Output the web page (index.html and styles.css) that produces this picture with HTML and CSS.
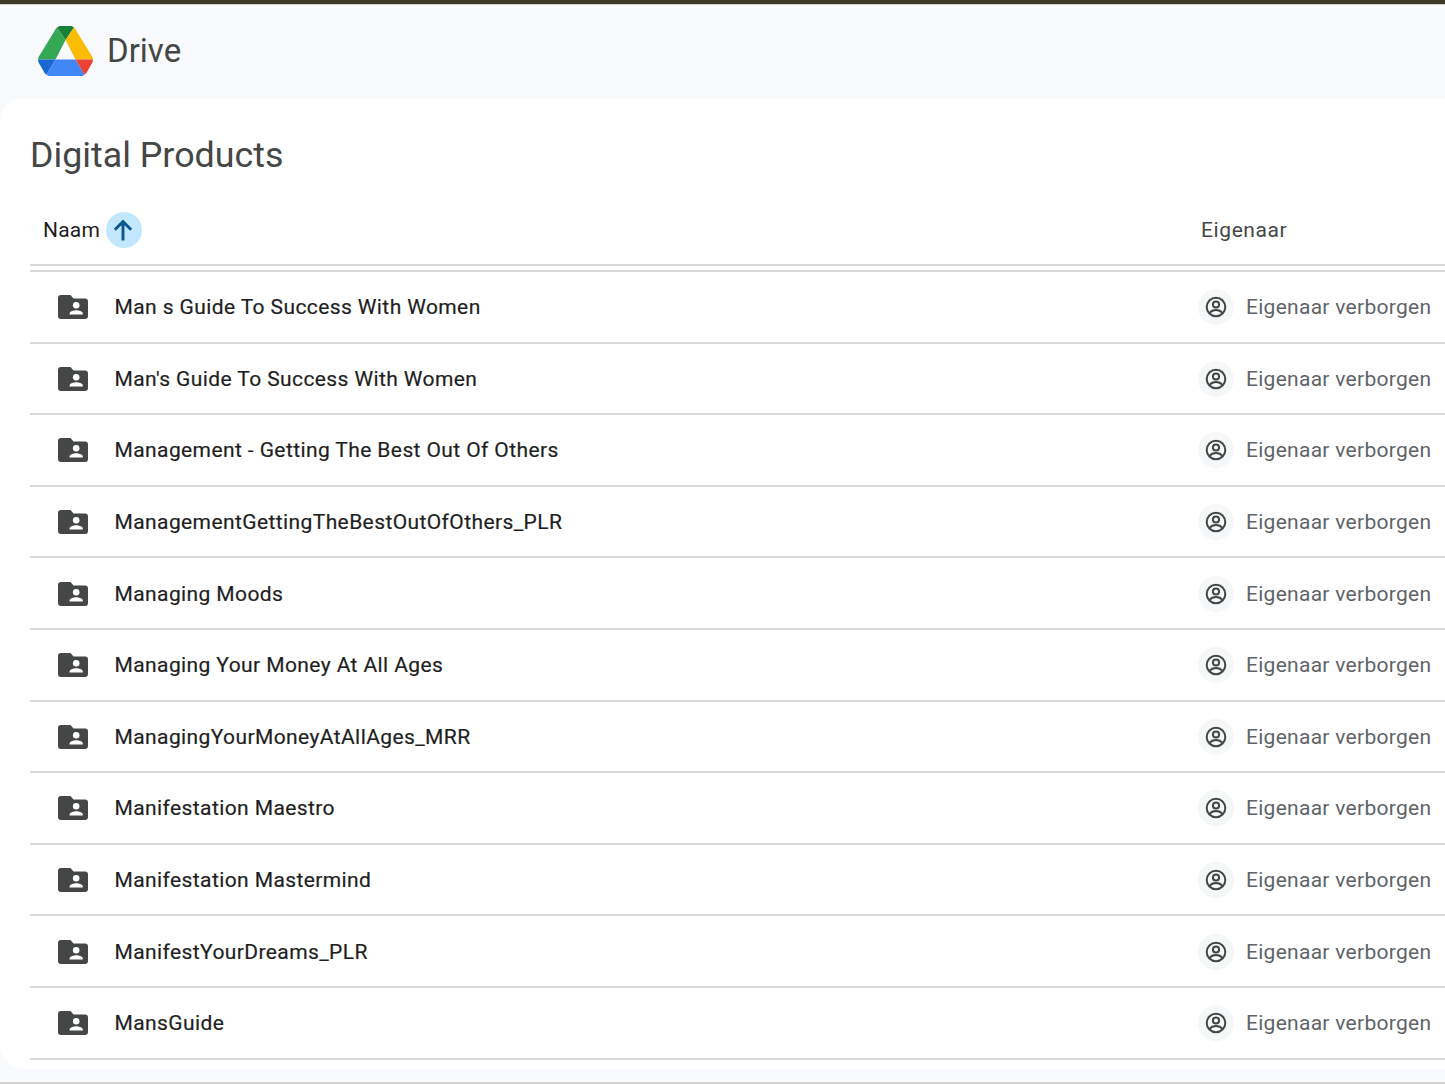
FILE: index.html
```html
<!DOCTYPE html>
<html lang="nl">
<head>
<meta charset="utf-8">
<title>Digital Products - Google Drive</title>
<link rel="stylesheet" href="styles.css">
</head>
<body>
<svg class="defs" width="0" height="0" aria-hidden="true">
  <symbol id="folder" viewBox="0 0 30 24">
    <path fill="#444746" d="M3 0h9.500l3 3.400H27a3 3 0 0 1 3 3V21a3 3 0 0 1-3 3H3a3 3 0 0 1-3-3V3a3 3 0 0 1 3-3z"/>
    <circle fill="#fff" cx="18.200" cy="10.200" r="3.300"/>
    <path fill="#fff" d="M11.600 19.600v-1.200c0-2 4.400-3.200 6.600-3.200s6.600 1.200 6.600 3.200v1.200z"/>
  </symbol>
  <symbol id="owner" viewBox="0 0 24 24">
    <circle cx="12" cy="12" r="9.300" fill="none" stroke="#444746" stroke-width="2"/>
    <circle cx="12" cy="9.500" r="3.100" fill="none" stroke="#444746" stroke-width="2"/>
    <path fill="none" stroke="#444746" stroke-width="2" d="M5.500 18c1.500-2 4-3 6.500-3s5 1 6.500 3"/>
  </symbol>
</svg>
<div class="topbar"></div>
<header class="brand">
  <svg class="logo" viewBox="0 0 55 50" aria-hidden="true">
    <path fill="#188038" d="M19 1.500 27.500 14 36 1.500C35 .6 33.800 0 32.300 0H22.700C21.300 0 20 .6 19 1.500z"/>
    <path fill="#34a853" d="M19 1.500C18.200 2.200 17.600 3 17.100 3.900L.9 30.600C.3 31.600 0 32.700 0 33.500H17.500L27.500 14z"/>
    <path fill="#fbbc04" d="M36 1.500 27.500 14 37.500 33.500H55C55 32.700 54.700 31.600 54.100 30.600L37.900 3.900C37.400 3 36.800 2.200 36 1.500z"/>
    <path fill="#1967d2" d="M0 33.500C0 34.700.3 35.800.9 36.900L6 46C6.600 47 7.500 48 8.500 48.700L17.500 33.500z"/>
    <path fill="#4285f4" d="M17.500 33.500 8.500 48.700C9.500 49.500 10.800 50 12 50H43C44.200 50 45.500 49.500 46.500 48.700L37.500 33.500z"/>
    <path fill="#ea4335" d="M37.500 33.500 46.500 48.700C47.500 48 48.400 47 49 46L54.100 36.900C54.700 35.800 55 34.700 55 33.500z"/>
  </svg>
  <span class="brand-name">Drive</span>
</header>
<main class="panel">
  <h1 class="title">Digital Products</h1>
  <div class="table">
    <div class="head">
      <div class="head-name">
        <span>Naam</span>
        <span class="sort">
          <svg viewBox="0 0 24 24" aria-hidden="true"><path fill="none" stroke="#0b5a8c" stroke-width="2.500" d="M12 21V5M5 11.800 12 4.800l7 7"/></svg>
        </span>
      </div>
      <div class="head-owner">Eigenaar</div>
    </div>
    <div class="rows">
      <div class="row"><svg class="folder"><use href="#folder"/></svg><span class="name">Man s Guide To Success With Women</span><div class="owner"><span class="avatar"><svg><use href="#owner"/></svg></span><span>Eigenaar verborgen</span></div></div>
      <div class="row"><svg class="folder"><use href="#folder"/></svg><span class="name">Man's Guide To Success With Women</span><div class="owner"><span class="avatar"><svg><use href="#owner"/></svg></span><span>Eigenaar verborgen</span></div></div>
      <div class="row"><svg class="folder"><use href="#folder"/></svg><span class="name">Management - Getting The Best Out Of Others</span><div class="owner"><span class="avatar"><svg><use href="#owner"/></svg></span><span>Eigenaar verborgen</span></div></div>
      <div class="row"><svg class="folder"><use href="#folder"/></svg><span class="name">ManagementGettingTheBestOutOfOthers_PLR</span><div class="owner"><span class="avatar"><svg><use href="#owner"/></svg></span><span>Eigenaar verborgen</span></div></div>
      <div class="row"><svg class="folder"><use href="#folder"/></svg><span class="name">Managing Moods</span><div class="owner"><span class="avatar"><svg><use href="#owner"/></svg></span><span>Eigenaar verborgen</span></div></div>
      <div class="row"><svg class="folder"><use href="#folder"/></svg><span class="name">Managing Your Money At All Ages</span><div class="owner"><span class="avatar"><svg><use href="#owner"/></svg></span><span>Eigenaar verborgen</span></div></div>
      <div class="row"><svg class="folder"><use href="#folder"/></svg><span class="name">ManagingYourMoneyAtAllAges_MRR</span><div class="owner"><span class="avatar"><svg><use href="#owner"/></svg></span><span>Eigenaar verborgen</span></div></div>
      <div class="row"><svg class="folder"><use href="#folder"/></svg><span class="name">Manifestation Maestro</span><div class="owner"><span class="avatar"><svg><use href="#owner"/></svg></span><span>Eigenaar verborgen</span></div></div>
      <div class="row"><svg class="folder"><use href="#folder"/></svg><span class="name">Manifestation Mastermind</span><div class="owner"><span class="avatar"><svg><use href="#owner"/></svg></span><span>Eigenaar verborgen</span></div></div>
      <div class="row"><svg class="folder"><use href="#folder"/></svg><span class="name">ManifestYourDreams_PLR</span><div class="owner"><span class="avatar"><svg><use href="#owner"/></svg></span><span>Eigenaar verborgen</span></div></div>
      <div class="row"><svg class="folder"><use href="#folder"/></svg><span class="name">MansGuide</span><div class="owner"><span class="avatar"><svg><use href="#owner"/></svg></span><span>Eigenaar verborgen</span></div></div>
    </div>
  </div>
</main>
</body>
</html>
```
FILE: styles.css
```css
* { box-sizing: border-box; }
html, body { margin: 0; padding: 0; }
body {
  width: 1445px;
  height: 1084px;
  overflow: hidden;
  background: #f8fafd;
  font-family: Roboto, "Liberation Sans", sans-serif;
  color: #1f1f1f;
  border-bottom: 2px solid #d3d3d3;
}
.defs { position: absolute; }
.topbar { height: 5px; background: #3e3c28; border-bottom: 1px solid #cfcfcf; }
.brand { height: 93px; display: flex; align-items: center; padding: 0 0 2px 38px; gap: 14px; }
.logo { width: 55px; height: 50px; display: block; }
.brand-name { font-size: 33px; color: #444746; letter-spacing: 0; }
.panel {
  height: 971px;
  background: #fff;
  border-radius: 24px 0 0 24px;
  padding: 34px 0 0 30px;
}
.title {
  margin: 0;
  font-size: 35.800px;
  line-height: 46px;
  font-weight: 400;
  color: #444746;
}
.head {
  margin-top: 24px;
  height: 64px;
  border-bottom: 2px solid #d9d9d9;
  display: flex;
  align-items: center;
  justify-content: space-between;
  font-size: 21px;
  padding: 0 0 6px 13px;
}
.head-name { display: flex; align-items: center; gap: 6px; letter-spacing: 0.2px; }
.sort {
  width: 36px;
  height: 36px;
  border-radius: 50%;
  background: #c2e7ff;
  display: flex;
  align-items: center;
  justify-content: center;
}
.sort svg { width: 28px; height: 28px; margin-left: -2px; flex: none; }
.head-owner { width: 244px; color: #444746; letter-spacing: 0.6px; }
.rows { margin-top: 4px; border-top: 2px solid #d9d9d9; }
.row {
  height: 71.600px;
  padding-top: 1px;
  border-bottom: 2px solid #d9d9d9;
  display: flex;
  align-items: center;
}
.folder { width: 30px; height: 24px; margin-left: 28px; flex: none; }
.name { margin-left: 26.500px; font-size: 21px; flex: 1; color: #1f1f1f; letter-spacing: 0.4px; -webkit-text-stroke: 0.2px #1f1f1f; }
.owner { width: 244px; flex: none; display: flex; align-items: center; gap: 12px; font-size: 21px; color: #5f6368; white-space: nowrap; letter-spacing: 0.28px; }
.avatar {
  width: 36px;
  height: 36px;
  margin-left: -3px;
  border-radius: 50%;
  background: #f6f7f8;
  display: flex;
  align-items: center;
  justify-content: center;
  flex: none;
}
.avatar svg { width: 24px; height: 24px; }
```
